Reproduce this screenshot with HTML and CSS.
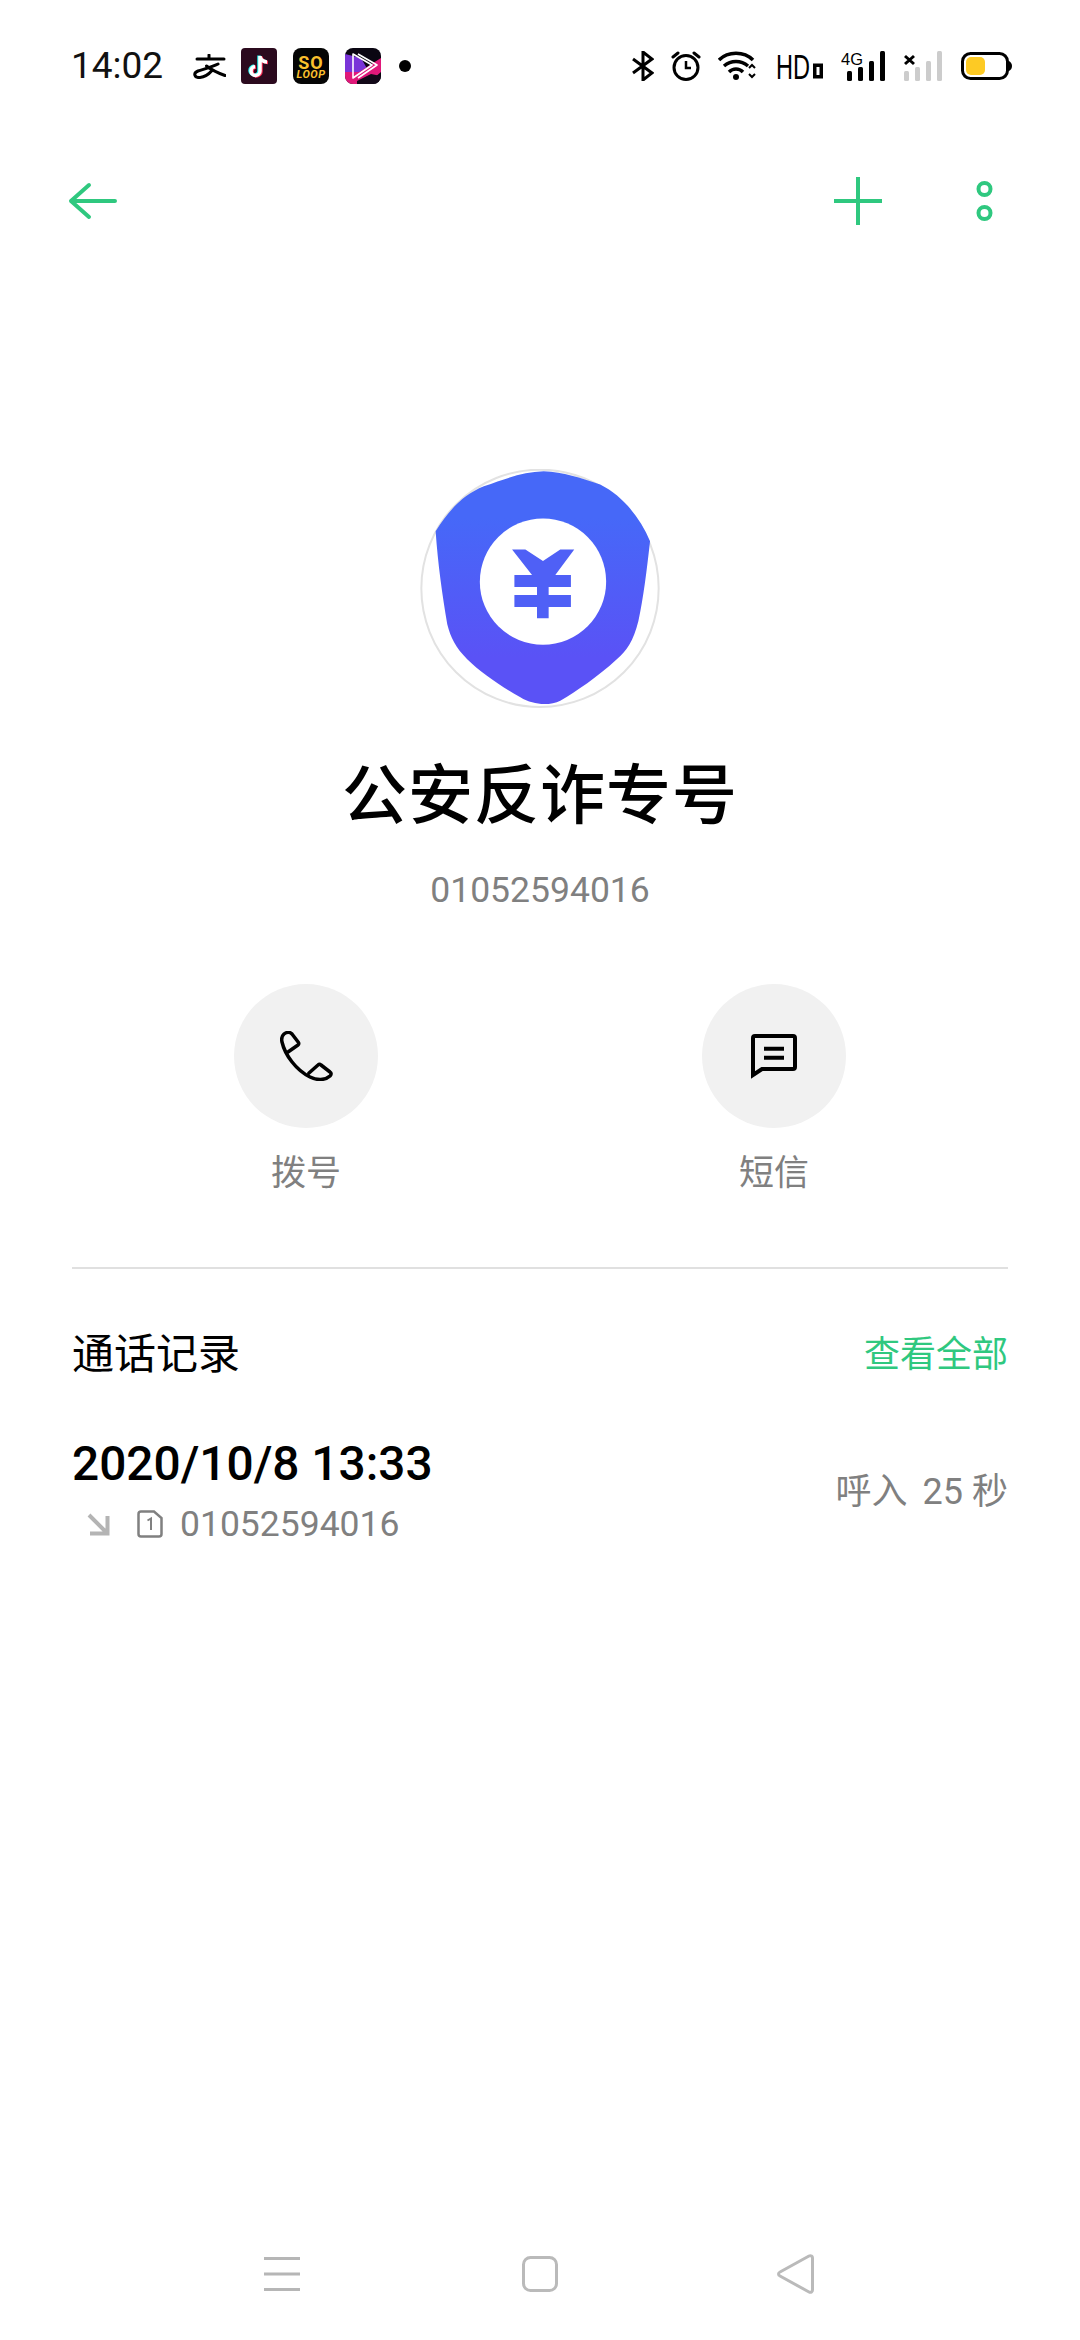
FILE: index.html
```html
<!DOCTYPE html>
<html lang="zh-CN">
<head>
<meta charset="utf-8">
<title>公安反诈专号</title>
<link rel="stylesheet" href="styles.css">
</head>
<body>
<div class="page">
  <header class="status">
    <div class="status-left">
      <span class="time">14:02</span>
      <svg class="ic-ali" width="34" height="25" viewBox="0 0 34 25" fill="none" stroke="#000" stroke-width="3" stroke-linecap="round" stroke-linejoin="round"><path d="M5 5H32M17 1V5M26 10C20 13 12 15 6 17C1 19 2 24 8 23.500C13 23 17 20 20 16.500M14.500 12C19 15.500 26 19 33 21.500"/></svg>
      <svg class="app" width="36" height="36" viewBox="0 0 36 36"><rect width="36" height="36" rx="4" fill="#2b0a1e"/><path d="M19 8V23A4.500 4.500 0 1 1 14 18.500M19 8C19 11 22 14 26 14" fill="none" stroke="#25f4ee" stroke-width="3.500" transform="translate(-1 -0.500)"/><path d="M19 8V23A4.500 4.500 0 1 1 14 18.500M19 8C19 11 22 14 26 14" fill="none" stroke="#fe2c55" stroke-width="3.500" transform="translate(1 0.500)"/><path d="M19 8V23A4.500 4.500 0 1 1 14 18.500M19 8C19 11 22 14 26 14" fill="none" stroke="#fff" stroke-width="3.500"/></svg>
      <svg class="app" width="36" height="36" viewBox="0 0 36 36"><rect width="36" height="36" rx="8" fill="#050505"/><text class="so-loop" x="18" y="21"><tspan class="so">SO</tspan><tspan class="loop" x="18" y="30">LOOP</tspan></text></svg>
      <svg class="app" width="36" height="36" viewBox="0 0 36 36"><defs><clipPath id="clipPlay"><rect width="36" height="36" rx="8"/></clipPath></defs><g clip-path="url(#clipPlay)"><rect width="36" height="36" fill="#0a0612"/><path d="M0 6L16 10L24 24L0 26Z" fill="#7a35d8"/><path d="M0 24L14 24L36 10V24L22 36H0Z" fill="#e0187a"/><path d="M12 33L26 26L36 28V36H12Z" fill="#120818"/></g><path d="M8 6L27 17L8 30ZM13 6L32 17L13 30" fill="none" stroke="#fff" stroke-width="1.600" stroke-linejoin="round"/></svg>
      <span class="dot"></span>
    </div>
    <div class="status-right">
      <svg width="22" height="30" viewBox="0 0 22 30" fill="none" stroke="#000" stroke-width="3"><path d="M1 8L20 22L11 29V1L20 8L1 22"/></svg>
      <svg width="30" height="30" viewBox="0 0 30 30" fill="none" stroke="#000" stroke-width="3"><circle cx="15" cy="16.500" r="12"/><path d="M15 10V17H20" stroke-width="2.500"/><path d="M2 6L7 2M28 6L23 2" stroke-linecap="round"/></svg>
      <svg width="40" height="30" viewBox="0 0 40 30" fill="none" stroke="#000" stroke-width="3.500"><path d="M1 9C10 0 26 0 35 9M6 15C13 9 23 9 30 15M11 21C15 17 21 17 25 21"/><circle cx="18" cy="26" r="3" fill="#000" stroke="none"/><path d="M31 17L34 14L37 17M31 23L34 26L37 23" stroke-width="2"/></svg>
      <svg class="ic-hd" width="54" height="44" viewBox="0 0 54 44"><text x="0" y="34.500" class="hd" textLength="34" lengthAdjust="spacingAndGlyphs">HD</text><path d="M37 19.500H47V34.500H37ZM40.500 23V31H43.500V23Z" fill="#000" fill-rule="evenodd"/></svg>
      <svg width="45" height="44" viewBox="0 0 45 44"><text x="0" y="21" class="g4" textLength="22" lengthAdjust="spacingAndGlyphs">4G</text><rect x="6" y="27" width="5" height="10" rx="1.500"/><rect x="17" y="23" width="5" height="14" rx="1.500"/><rect x="28" y="17" width="5" height="20" rx="1.500"/><rect x="39" y="7" width="5" height="30" rx="1.500"/></svg>
      <svg width="40" height="30" viewBox="0 0 40 30" fill="#ccc"><path d="M1 5L10 13M10 5L1 13" stroke="#000" stroke-width="3"/><rect x="0" y="20" width="5" height="10" rx="1.500"/><rect x="11" y="16" width="5" height="14" rx="1.500"/><rect x="22" y="10" width="5" height="20" rx="1.500"/><rect x="33" y="0" width="5" height="30" rx="1.500"/></svg>
      <svg width="51" height="28" viewBox="0 0 51 28"><rect x="1.500" y="1.500" width="45" height="25" rx="8" fill="none" stroke="#000" stroke-width="3"/><rect x="5" y="5" width="19" height="18" rx="5" fill="#fdca24"/><path d="M48 9C50 10 51 12 51 14C51 16 50 18 48 19Z"/></svg>
    </div>
  </header>

  <nav class="toolbar">
    <svg width="50" height="38" viewBox="0 0 50 38" fill="none" stroke="#2fc87f" stroke-width="4" stroke-linecap="round" stroke-linejoin="round"><path d="M47 19H3M21 3L3 19L21 35"/></svg>
    <div class="toolbar-actions">
      <svg width="48" height="48" viewBox="0 0 48 48" fill="#2fc87f"><rect y="22" width="48" height="4"/><rect x="22" width="4" height="48"/></svg>
      <svg width="17" height="40" viewBox="0 0 17 40" fill="none" stroke="#2fc87f" stroke-width="4"><circle cx="8.500" cy="8" r="6"/><circle cx="8.500" cy="32" r="6"/></svg>
    </div>
  </nav>

  <main class="profile">
    <svg class="avatar" width="240" height="240" viewBox="58 53 722 722">
      <defs><linearGradient id="shieldFill" x1="0" y1="0" x2="0" y2="1"><stop offset="0.200" stop-color="#4668f8"/><stop offset="0.800" stop-color="#5a52f6"/></linearGradient></defs>
      <circle cx="419" cy="412" r="357" fill="#fff" stroke="#e2e2e2" stroke-width="6"/>
      <path d="M105 240C150 170 190 130 250 105C320 80 370 62 430 60C490 62 540 80 600 100C670 135 720 200 750 270C740 360 730 440 715 510C700 570 680 600 650 625C590 680 530 720 480 750C450 765 400 765 360 740C300 705 240 665 200 625C165 590 150 560 140 520C125 430 112 340 105 240Z" fill="url(#shieldFill)"/>
      <circle cx="428" cy="392" r="190" fill="#fff"/>
      <path d="M335 295H375L428 330L480 295H522L465 372H512V408H445V432H512V468H445V502H410V468H342V432H410V408H342V372H395Z" fill="#4f60f6"/>
    </svg>
    <h1 class="name">公安反诈专号</h1>
    <p class="number">01052594016</p>
    <div class="actions">
      <div class="action">
        <div class="action-circle">
          <svg width="53" height="50" viewBox="0 0 53 50" fill="none" stroke="#000" stroke-width="3.500" stroke-linejoin="round" stroke-linecap="round"><path d="M8 21L18 14C19 13 19 12.500 18.500 11.500L12 3C10 0.800 6.500 1 4 3C1.800 5 1.300 8 2 11C5 24 16 39 30 46C37 49.500 45 49.500 50 45C51.500 43.500 51.500 42 50 41L41 34C40 33 39 33 38 34L29 42"/></svg>
        </div>
        <span class="action-label">拨号</span>
      </div>
      <div class="action">
        <div class="action-circle">
          <svg width="46" height="45" viewBox="0 0 46 45" fill="none" stroke="#000" stroke-width="4"><path d="M2 41V4C2 2.800 2.800 2 4 2H42C43.200 2 44 2.800 44 4V33C44 34.200 43.200 35 42 35H11Z"/><path d="M13 14.700H33M13 23.700H33"/></svg>
        </div>
        <span class="action-label">短信</span>
      </div>
    </div>
    <div class="divider"></div>
    <div class="section-head">
      <h2 class="section-title">通话记录</h2>
      <a class="section-link">查看全部</a>
    </div>
    <div class="call">
      <div class="call-main">
        <div class="call-date">2020/10/8 13:33</div>
        <div class="call-sub">
          <svg width="23" height="23" viewBox="0 0 23 23" fill="none" stroke="#b4b4b4" stroke-width="4"><path d="M2 2L20 20M3 20.500H20.500V3"/></svg>
          <svg class="sim" width="26" height="28" viewBox="0 0 26 28" fill="none" stroke="#808080" stroke-width="2.500"><path d="M4 1.500H17L24.500 8V24C24.500 25.500 23.500 26.500 22 26.500H4C2.500 26.500 1.500 25.500 1.500 24V4C1.500 2.500 2.500 1.500 4 1.500Z"/><path d="M10.500 10.500L14 8.500V20" stroke-width="2"/></svg>
          <span class="call-number">01052594016</span>
        </div>
      </div>
      <div class="call-meta"><span>呼入</span><span>25 秒</span></div>
    </div>
  </main>

  <footer class="navbar">
    <svg width="36" height="34" viewBox="0 0 36 34" fill="#b6b6b6"><rect width="36" height="3"/><rect y="15.500" width="36" height="3"/><rect y="31" width="36" height="3"/></svg>
    <svg width="36" height="36" viewBox="0 0 36 36" fill="none" stroke="#bababa" stroke-width="3"><rect x="1.500" y="1.500" width="33" height="33" rx="7"/></svg>
    <svg class="nav-back" width="37" height="40" viewBox="0 0 37 40" fill="none" stroke="#bababa" stroke-width="3" stroke-linejoin="round"><path d="M32 2C34 1 35.500 2.500 35.500 4V36C35.500 37.500 34 39 32 38L3 22C1 21 1 19 3 18Z"/></svg>
  </footer>
</div>
</body>
</html>
```
FILE: styles.css
```css
* { box-sizing: border-box; }
html, body { margin: 0; padding: 0; background: #fff; }
body { font-family: Roboto, "Noto Sans CJK SC", sans-serif; color: #000; }
.page { width: 1080px; height: 2340px; display: flex; flex-direction: column; overflow: hidden; }

.status { height: 132px; padding: 0 68px 0 71px; display: flex; align-items: center; justify-content: space-between; }
.status-left { display: flex; align-items: center; }
.status-right { display: flex; align-items: center; gap: 17.400px; }
.time { font-size: 37px; line-height: 44px; width: 92px; color: #111; margin-right: 29px; }
.ic-ali { margin-right: 15px; }
.app { margin-right: 16px; }
.dot { width: 12px; height: 12px; border-radius: 50%; background: #000; margin-left: 2px; }
.so-loop { fill: #fbc02d; text-anchor: middle; font-family: Roboto, sans-serif; font-weight: 700; }
.so { font-size: 18px; letter-spacing: 1px; }
.loop { font-size: 11px; font-style: italic; letter-spacing: 0.500px; }
.ic-hd { margin-right: -6px; }
.hd { font: 400 35px "Liberation Sans", sans-serif; fill: #000; }
.g4 { font: 400 17px "Liberation Sans", sans-serif; fill: #000; }

.toolbar { height: 138px; padding: 0 87px 0 68px; display: flex; align-items: center; justify-content: space-between; }
.toolbar-actions { display: flex; align-items: center; gap: 94px; }

.profile { display: flex; flex-direction: column; align-items: center; padding: 0 72px; }
.avatar { margin-top: 199px; display: block; }
.name { margin: 36px 0 0; font-size: 65px; line-height: 90px; font-weight: 500; font-family: "Noto Sans CJK SC", sans-serif; color: #000; letter-spacing: 1px; }
.number { margin: 30px 0 0; font-size: 35.500px; line-height: 50px; color: #808080; }

.actions { align-self: flex-start; margin: 69px 0 0 134px; display: flex; gap: 268px; }
.action { width: 200px; display: flex; flex-direction: column; align-items: center; }
.action-circle { width: 144px; height: 144px; border-radius: 50%; background: #f1f1f1; display: flex; align-items: center; justify-content: center; }
.action-label { margin-top: 17px; font-size: 35px; line-height: 50px; color: #808080; font-family: "Noto Sans CJK SC", sans-serif; font-weight: 400; }

.divider { align-self: stretch; height: 2px; background: #e0e0e0; margin-top: 72px; }
.section-head { align-self: stretch; margin-top: 52px; height: 60px; display: flex; align-items: center; justify-content: space-between; }
.section-title { margin: 0; font-size: 42px; font-weight: 400; line-height: 60px; font-family: "Noto Sans CJK SC", sans-serif; }
.section-link { font-size: 36px; color: #2fc87f; font-family: "Noto Sans CJK SC", sans-serif; font-weight: 400; }

.call { align-self: stretch; margin-top: 53px; display: flex; align-items: center; justify-content: space-between; }
.call-main { display: flex; flex-direction: column; }
.call-date { font-size: 47.800px; line-height: 60px; font-weight: 500; }
.call-sub { height: 60px; display: flex; align-items: center; padding-left: 15px; }
.sim { margin-left: 27px; }
.call-number { margin-left: 17px; font-size: 35.500px; color: #808080; }
.call-meta { display: flex; gap: 15px; font-size: 36px; color: #808080; font-family: Roboto, "Noto Sans CJK SC", sans-serif; font-weight: 400; margin-top: -12px; }

.navbar { margin-top: auto; height: 132px; padding: 0 0 0 264px; display: flex; align-items: center; gap: 222px; }
.nav-back { margin-left: -3px; }
```
